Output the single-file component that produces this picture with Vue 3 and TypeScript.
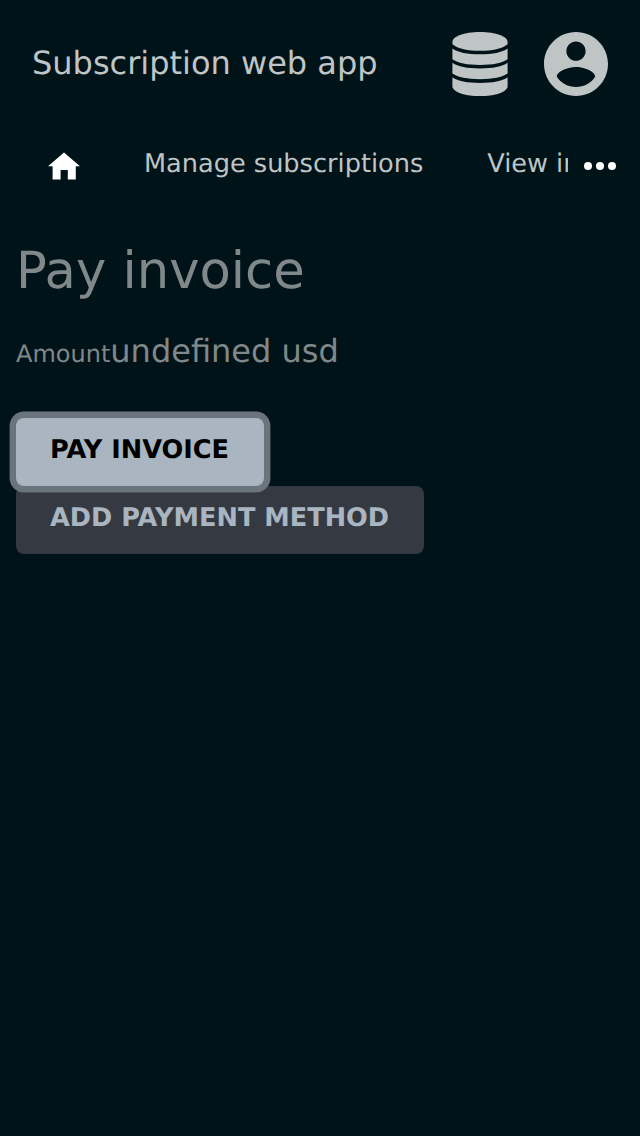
<script setup lang="ts">
const title = 'Subscription web app'
</script>

<template>
  <div class="app">
    <header class="top">
      <h1 class="brand">{{ title }}</h1>
      <div class="icons">
        <svg class="db" viewBox="0 0 56 64" fill="currentColor"><path d="M.4 10.200C.4 4.300 12 0 28 0s27.600 4.300 27.600 10.200v2C50.500 16.800 40 18.700 28 18.700S5.500 16.800.4 12.200z"/><path d="M.4 16.400C6 20.400 15 22.200 28 22.200s22-1.800 27.600-5.800v10.800C50 31 41 32.900 28 32.900S6 31 .4 27.200z"/><path d="M.4 30.800C6 34.800 15 36.500 28 36.500s22-1.700 27.600-5.700v10.800C50 45.400 41 47.200 28 47.200S6 45.400.4 41.600z"/><path d="M.4 45.200C6 49.200 15 50.900 28 50.900S50 49.200 55.600 45.200v10C53 60.600 43 64 28 64S3 60.600.4 55.200z"/></svg>
        <svg class="user" viewBox="2 2 20 20"><path fill="currentColor" d="M12 2C6.480 2 2 6.480 2 12s4.480 10 10 10 10-4.480 10-10S17.520 2 12 2zm0 3c1.660 0 3 1.340 3 3s-1.340 3-3 3-3-1.340-3-3 1.340-3 3-3zm0 14.200c-2.500 0-4.710-1.280-6-3.220.03-1.990 4-3.080 6-3.080 1.990 0 5.970 1.090 6 3.080-1.290 1.940-3.500 3.220-6 3.220z"/></svg>
      </div>
    </header>
    <nav class="nav">
      <a class="home"><svg viewBox="0 0 32 28"><path fill="currentColor" d="M16 .400l16 13.900h-4.200V27.600h-8V18h-7.200v9.600h-8V14.300H0z"/></svg></a>
      <a class="link">Manage subscriptions</a>
      <a class="link cut">View invoices</a>
      <button class="more" aria-label="More"><i></i><i></i><i></i></button>
    </nav>
    <main class="content">
      <h2>Pay invoice</h2>
      <p class="amount"><span>Amount</span>undefined usd</p>
      <div class="actions">
        <button class="btn primary">PAY INVOICE</button>
        <button class="btn secondary">ADD PAYMENT METHOD</button>
      </div>
    </main>
  </div>
</template>

<style>
body { margin: 0; background: #001318; }
</style>
<style scoped>
* { box-sizing: border-box; }
.app { min-height: 1136px; background: #001318; color: #bfc4c5; font-family: "DejaVu Sans", sans-serif; text-rendering: geometricPrecision; overflow: hidden; }
.top { height: 128px; padding: 0 32px; display: flex; align-items: center; justify-content: space-between; }
.brand { margin: 0; padding-bottom: 2px; font-size: 32px; font-weight: 400; line-height: 48px; }
.icons { display: flex; gap: 36px; align-items: center; }
.db { width: 56px; height: 64px; }
.user { width: 64px; height: 64px; }
svg { display: block; }
.nav { height: 72px; display: flex; padding-left: 48px; font-size: 25.6px; white-space: nowrap; }
.home { width: 32px; padding-top: 24px; color: #fff; }
.home svg { width: 32px; height: 28px; }
.link { margin-left: 64px; line-height: 72px; }
.cut { width: 80.600px; overflow: hidden; }
.more { margin: 34px 0 0 auto; padding: 0 24px 0 0; border: 0; background: none; display: flex; gap: 4px; height: 9px; }
.more i { width: 8px; height: 8px; border-radius: 50%; background: #fff; }
.content { padding: 38px 16px 0; color: #808889; }
h2 { margin: 0; font-size: 51.2px; font-weight: 400; line-height: 66px; }
.amount { margin: 23px 0 0; font-size: 32px; line-height: 48px; }
.amount span { font-size: 24px; }
.actions { margin-top: 40px; display: flex; flex-direction: column; align-items: flex-start; }
.btn { height: 68px; border: 0; border-radius: 8px; padding: 0 34px 4px; font: 700 25.6px "DejaVu Sans", sans-serif; text-rendering: inherit; text-align: left; white-space: nowrap; }
.primary { width: 248px; background: #a9b5c1; color: #000; box-shadow: 0 0 0 6.4px #6b747d; position: relative; }
.secondary { width: 408px; background: #353941; color: #a9b5c1; }
</style>
